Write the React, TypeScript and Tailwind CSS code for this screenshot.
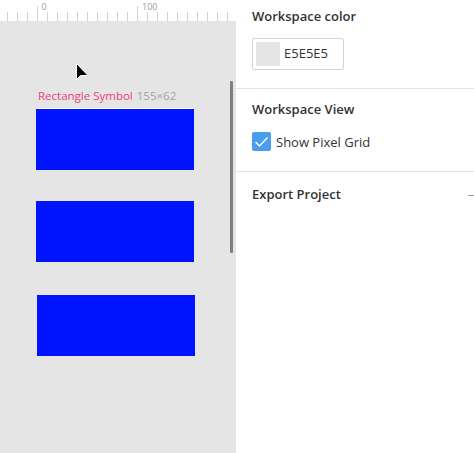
import React from "react";

const FONT = { fontFamily: '"Open Sans", "Noto Sans", sans-serif' };

function Ruler() {
  const ticks = Array.from({ length: 23 }, (_, i) => 7.5 + i * 10);
  return (
    <svg width="236" height="21" className="block bg-white">
      {ticks.map((x) => {
        const major = x === 37.5 || x === 137.5;
        return <line key={x} x1={x} x2={x} y1={major ? 6 : 12} y2={21} stroke="#d2d2d2" strokeWidth="1" />;
      })}
      <text x="41.5" y="9.5" fontSize="9" fill="#9a9a9a" fontFamily="Open Sans, sans-serif">0</text>
      <text x="142" y="9.5" fontSize="9" fill="#9a9a9a" fontFamily="Open Sans, sans-serif">100</text>
    </svg>
  );
}

function Cursor() {
  return (
    <svg width="18" height="22" viewBox="0 0 18 22" className="absolute left-[75px] top-[41px]">
      <path d="M1.5 1.5 L1.5 17.5 L5.5 13.5 L13 13.5 Z" fill="#000" stroke="#fff" strokeWidth="1" strokeLinejoin="round" />
    </svg>
  );
}

function Canvas() {
  return (
    <div className="relative w-[236px] h-full bg-[#e5e5e5] flex flex-col">
      <Ruler />
      <div className="relative flex-1">
        <Cursor />
        <div className="pt-[67px] pl-[38px] text-[11.5px] leading-[16px]" style={FONT}>
          <span className="text-[#ec3d82]">Rectangle Symbol</span>
          <span className="text-[#a3a3a3] ml-[4px]">155×62</span>
        </div>
        <div className="ml-[38px] mt-[4px] w-[156px] h-px bg-white" />
        <div className="ml-[36px] w-[158px] h-[61px] bg-[#0014ff]" />
        <div className="ml-[36px] mt-[31px] w-[158px] h-[61px] bg-[#0014ff]" />
        <div className="ml-[37px] mt-[33px] w-[158px] h-[61px] bg-[#0014ff]" />
        <div className="absolute left-[230px] top-[60px] w-[3px] h-[172px] bg-[#7f7f7f] rounded-[1px]" />
      </div>
    </div>
  );
}

function Panel() {
  return (
    <div className="flex-1 bg-white text-[#333] overflow-hidden" style={FONT}>
      <div className="pl-4 pt-[7px] pb-[18px] border-b border-[#e5e5e5]">
        <h2 className="text-[13px] leading-[18px] font-semibold">Workspace color</h2>
        <div className="mt-[13px] w-[92px] h-[32px] border border-[#d4d4d4] rounded-[2px] flex items-center pl-[3px] gap-[4px]">
          <div className="w-[24px] h-[24px] bg-[#e5e5e5]" />
          <span className="text-[13px]">E5E5E5</span>
        </div>
      </div>
      <div className="pl-4 pt-[11px] pb-[20px] border-b border-[#e5e5e5]">
        <h2 className="text-[13px] leading-[18px] font-semibold">Workspace View</h2>
        <label className="mt-[14px] flex items-center gap-[5px]">
          <span className="w-[19px] h-[19px] bg-[#4a9cf0] rounded-[2px] flex items-center justify-center">
            <svg width="15" height="12" viewBox="0 0 15 12">
              <path d="M1.5 6 L5.5 10 L13.5 1.5" fill="none" stroke="#fff" strokeWidth="1.4" />
            </svg>
          </span>
          <span className="text-[13px] leading-[18px]">Show Pixel Grid</span>
        </label>
      </div>
      <div className="pl-4 pr-0 pt-[13px] flex items-center justify-between">
        <h2 className="text-[13px] leading-[18px] font-semibold">Export Project</h2>
        <div className="w-[6px] h-px bg-[#9a9a9a] mt-[2px]" />
      </div>
    </div>
  );
}

export default function App() {
  return (
    <div className="flex w-[474px] h-[453px] overflow-hidden">
      <Canvas />
      <Panel />
    </div>
  );
}
